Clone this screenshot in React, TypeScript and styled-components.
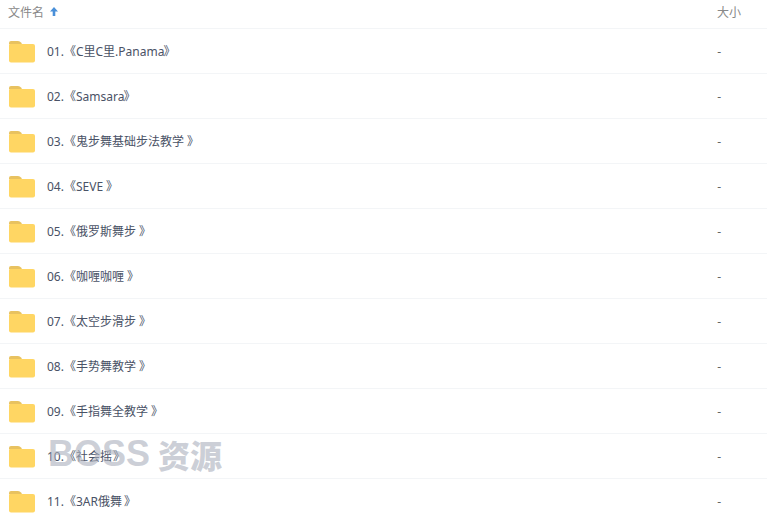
import React from 'react';
import styled, { createGlobalStyle } from 'styled-components';

const GlobalStyle = createGlobalStyle`
  html, body {
    margin: 0;
    background: #fff;
    overflow: hidden;
  }
`;

const Page = styled.div`
  position: relative;
  width: 767px;
  height: 519px;
  overflow: hidden;
  font-family: "Noto Sans", "Noto Sans CJK SC", sans-serif;
  font-size: 12px;
`;

const HeaderRow = styled.div`
  display: flex;
  align-items: center;
  justify-content: space-between;
  height: 29px;
  padding: 0 26px 5px 8px;
  box-sizing: border-box;
  border-bottom: 1px solid #f3f5f7;
  color: #888;
`;

const HeaderName = styled.div`
  display: flex;
  align-items: center;
  gap: 6px;
`;

const Row = styled.div`
  display: flex;
  align-items: center;
  height: 45px;
  padding: 2px 46px 0 9px;
  box-sizing: border-box;
  border-bottom: 1px solid #f3f5f7;
  color: #4a5266;
`;

const Name = styled.div`
  flex: 1;
  margin: 0 0 2px 12px;
  white-space: nowrap;
`;

const CloseQuote = styled.span<{ $gap: number }>`
  margin-left: ${(p) => p.$gap}px;
`;

const Size = styled.div`
  margin-bottom: 2px;
  color: #666;
`;

const Watermark = styled.div`
  position: absolute;
  left: 48px;
  top: 431px;
  display: flex;
  align-items: center;
  gap: 8px;
  font-family: "Liberation Sans", "Noto Sans CJK SC", sans-serif;
  font-size: 36px;
  font-weight: 700;
  color: rgba(170, 175, 188, 0.6);
  white-space: nowrap;
`;

const WatermarkCjk = styled.span`
  font-size: 32px;
  font-family: "Noto Sans CJK SC", sans-serif;
  font-weight: 900;
`;

const Folder = () => (
  <svg width="26" height="22" viewBox="0 0 26 22">
    <path d="M0 2 Q0 0 2 0 H9 Q11 0 12 1.5 L13 3 H0 Z" fill="#e8c260" />
    <path d="M0 4 Q0 3 1 3 H24 Q26 3 26 5 V19.5 Q26 21.5 24 21.5 H2 Q0 21.5 0 19.5 Z" fill="#ffd663" />
  </svg>
);

const UpArrow = () => (
  <svg width="8" height="9" viewBox="0 0 8 9">
    <path d="M4 0 L8 4.5 H5.3 V9 H2.7 V4.5 H0 Z" fill="#4a90d9" />
  </svg>
);

const files = [
  { no: '01', title: 'C里C里.Panama', gap: -1 },
  { no: '02', title: 'Samsara', gap: -1 },
  { no: '03', title: '鬼步舞基础步法教学', gap: 3 },
  { no: '04', title: 'SEVE', gap: 3 },
  { no: '05', title: '俄罗斯舞步', gap: 3 },
  { no: '06', title: '咖喱咖喱', gap: 3 },
  { no: '07', title: '太空步滑步', gap: 3 },
  { no: '08', title: '手势舞教学', gap: 3 },
  { no: '09', title: '手指舞全教学', gap: 3 },
  { no: '10', title: '社会摇', gap: 1 },
  { no: '11', title: '3AR俄舞', gap: 2 },
];

export default function App() {
  return (
    <Page>
      <GlobalStyle />
      <HeaderRow>
        <HeaderName>
          文件名
          <UpArrow />
        </HeaderName>
        <span>大小</span>
      </HeaderRow>
      {files.map((file) => (
        <Row key={file.no}>
          <Folder />
          <Name>
            {file.no}.《{file.title}
            <CloseQuote $gap={file.gap}>》</CloseQuote>
          </Name>
          <Size>-</Size>
        </Row>
      ))}
      <Watermark>
        BOSS
        <WatermarkCjk>资源</WatermarkCjk>
      </Watermark>
    </Page>
  );
}
